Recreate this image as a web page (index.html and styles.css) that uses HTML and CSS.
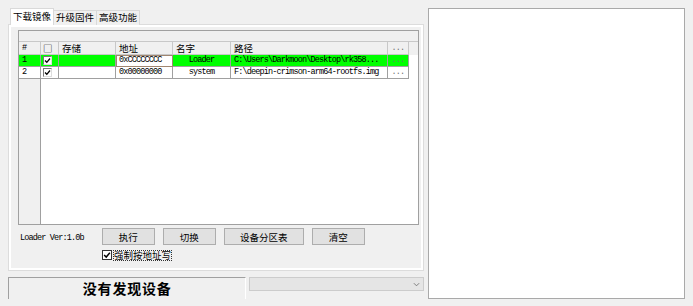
FILE: index.html
```html
<!DOCTYPE html>
<html lang="zh-CN">
<head>
  <meta charset="UTF-8" />
  <title>下载镜像</title>
  <link rel="stylesheet" href="styles.css">
</head>
<body>
  <div class="app">
    <div class="left">

      <!-- tab headers -->
      <div class="tabs">
        <div class="tab active">下载镜像</div>
        <div class="tab">升级固件</div>
        <div class="tab">高级功能</div>
      </div>

      <div class="tabpage">
        <!-- image list -->
        <div class="grid">
          <div class="grid-band"></div>
          <div class="grid-row head">
            <div class="cell rh mono">#</div>
            <div class="cell ck">□</div>
            <div class="cell">存储</div>
            <div class="cell">地址</div>
            <div class="cell">名字</div>
            <div class="cell">路径</div>
            <div class="cell dots mono">...</div>
          </div>
          <div class="grid-row sel">
            <div class="cell rh mono">1</div>
            <div class="cell ck"><span class="box"><svg viewBox="0 0 7 7"><path d="M1 3.5 L2.8 5.3 L6 1.5"/></svg></span></div>
            <div class="cell"></div>
            <div class="cell mono edit">0xCCCCCCCC</div>
            <div class="cell mono mid">Loader</div>
            <div class="cell mono">C:\Users\Darkmoon\Desktop\rk358...</div>
            <div class="cell dots mono">...</div>
          </div>
          <div class="grid-row">
            <div class="cell rh mono">2</div>
            <div class="cell ck"><span class="box"><svg viewBox="0 0 7 7"><path d="M1 3.5 L2.8 5.3 L6 1.5"/></svg></span></div>
            <div class="cell"></div>
            <div class="cell mono">0x00000000</div>
            <div class="cell mono mid">system</div>
            <div class="cell mono">F:\deepin-crimson-arm64-rootfs.img</div>
            <div class="cell dots mono">...</div>
          </div>
        </div>

        <div class="actions">
          <span class="ver mono">Loader Ver:1.0b</span>
          <button class="btn w-run">执行</button>
          <button class="btn w-run">切换</button>
          <button class="btn w-part">设备分区表</button>
          <button class="btn w-run">清空</button>
        </div>

        <label class="force">
          <span class="box flat"><svg viewBox="0 0 7 7"><path d="M1 3.5 L2.8 5.3 L6 1.5"/></svg></span>
          <span class="force-text">强制按地址写</span>
        </label>
      </div>

      <div class="bottom">
        <div class="status">没有发现设备</div>
        <div class="combo">
          <svg class="chev" viewBox="0 0 8 5"><path d="M1 1 L4 4 L7 1"/></svg>
        </div>
      </div>
    </div>

    <!-- log output -->
    <div class="log"></div>
  </div>
</body>
</html>
```

FILE: styles.css
```css
body {
  margin: 0;
  background: #f0f0f0;
  font-family: "Noto Sans CJK SC", sans-serif;
  font-size: 9.5px;
  color: #000;
  width: 693px;
  height: 306px;
  overflow: hidden;
}

.mono {
  font-family: "Liberation Mono", monospace;
  font-size: 8.5px;
  letter-spacing: -0.85px;
}

.app {
  display: flex;
  gap: 4px;
  padding: 8px 0 0 8px;
}

.left {
  width: 416px;
  display: flex;
  flex-direction: column;
}

/* tabs */
.tabs {
  display: flex;
  align-items: flex-end;
  height: 17px;
  padding-left: 3px;
  margin-bottom: -1px;
  position: relative;
  z-index: 1;
}

.tab {
  height: 14px;
  line-height: 13px;
  padding: 0 2px;
  border: 1px solid #d9d9d9;
  border-bottom: none;
  background: #f0f0f0;
  margin-left: -1px;
  white-space: nowrap;
}

.tab.active {
  height: 16px;
  line-height: 15px;
  background: #fff;
  padding: 0 2px;
}

.tabpage {
  border: 1px solid #dcdcdc;
  box-shadow: inset 0 0 0 2px #fff;
  padding: 5px 0 0 9px;
  box-sizing: border-box;
  height: 247px;
}

/* list */
.grid {
  width: 401px;
  height: 195px;
  box-sizing: border-box;
  border: 1px solid #a0a0a0;
  background: linear-gradient(to right, #f0f0f0 21px, #a0a0a0 21px, #a0a0a0 22px, #fff 22px);
}

.grid-band {
  height: 10px;
  background: #f0f0f0;
  border-bottom: 1px solid #c8c8c8;
}

.grid-row {
  display: grid;
  grid-template-columns: 22px 18px 57px 57px 58px 157px 21px;
  height: 12px;
  background: #fff;
}

.grid-row.head {
  height: 13px;
  background: #f0f0f0;
}

.grid-row.sel .cell {
  background: #00ff00;
}

.cell {
  border-right: 1px solid #a0a0a0;
  border-bottom: 1px solid #a0a0a0;
  padding-left: 3px;
  line-height: 11px;
  white-space: nowrap;
  overflow: hidden;
}

.head .cell {
  border-color: #c8c8c8;
  line-height: 12px;
  background: #f0f0f0;
}

.grid-row .cell.rh {
  background: #fff;
}

.grid-row.sel .cell.rh {
  background: #00ff00;
}

.head .cell.rh {
  background: #f0f0f0;
}

.cell.ck {
  padding-left: 2px;
}

.cell.mid {
  text-align: center;
  padding-left: 0;
}

.cell.dots {
  color: #707070;
  text-align: center;
  padding-left: 0;
}

.grid-row.sel .cell.edit {
  background: #fff;
  outline: 1px solid #a08670;
  outline-offset: -1px;
}

.box {
  display: inline-block;
  width: 9px;
  height: 9px;
  box-sizing: border-box;
  border: 1px solid #777;
  border-right-color: #ddd;
  border-bottom-color: #ddd;
  background: #fff;
  vertical-align: top;
  margin-top: 1px;
}

.box svg {
  display: block;
  width: 7px;
  height: 7px;
}

.box path {
  fill: none;
  stroke: #000;
  stroke-width: 1.3;
}

.box.flat {
  border: 1px solid #333;
  width: 10px;
  height: 10px;
  margin-top: 0;
}

.box.flat svg {
  width: 8px;
  height: 8px;
}

/* buttons */
.actions {
  display: flex;
  align-items: center;
  gap: 8px;
  margin-top: 3px;
  height: 17px;
}

.ver {
  margin-left: 2px;
  margin-right: 10px;
  margin-top: 3px;
}

.btn {
  height: 17px;
  padding: 0;
  border: 1px solid #adadad;
  background: #e1e1e1;
  font-family: "Noto Sans CJK SC", sans-serif;
  font-size: 9.5px;
  line-height: 14px;
  color: #000;
}

.w-run {
  width: 53px;
}

.w-part {
  width: 80px;
}

.force {
  display: flex;
  align-items: center;
  gap: 1px;
  margin: 4px 0 0 84px;
  height: 12px;
}

.force-text {
  outline: 1px dotted #333;
  outline-offset: -1px;
  line-height: 11px;
  padding: 0 1px;
}

/* status row */
.bottom {
  display: flex;
  gap: 3px;
  margin-top: 6px;
}

.status {
  width: 237px;
  height: 21px;
  border-top: 1px solid #a0a0a0;
  border-left: 1px solid #a0a0a0;
  border-right: 1px solid #fff;
  text-align: center;
  font-weight: bold;
  font-size: 14px;
  letter-spacing: 0.8px;
  line-height: 20px;
}

.combo {
  width: 175px;
  height: 14px;
  box-sizing: border-box;
  border: 1px solid #cccccc;
  background: #e5e5e5;
  display: flex;
  justify-content: flex-end;
  align-items: center;
  padding-right: 3px;
}

.chev {
  width: 7px;
  height: 5px;
}

.chev path {
  fill: none;
  stroke: #707070;
  stroke-width: 1;
}

/* log panel */
.log {
  width: 257px;
  height: 291px;
  box-sizing: border-box;
  border: 1px solid #a9a9a9;
  background: #fff;
}
```
